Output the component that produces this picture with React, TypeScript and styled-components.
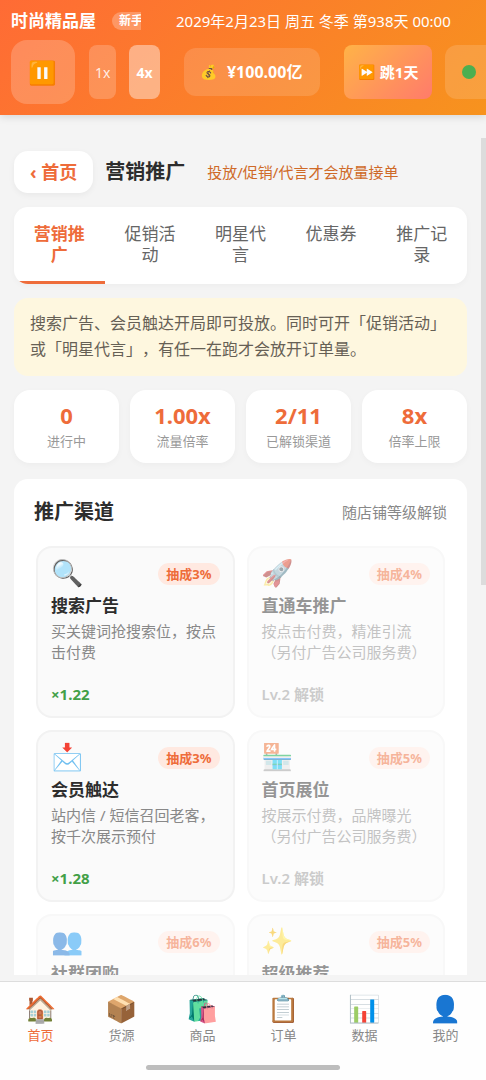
import React from "react";
import styled, { createGlobalStyle } from "styled-components";

const accent = "#ee6c3a";

const GlobalStyle = createGlobalStyle`
  * { box-sizing: border-box; }
  body {
    margin: 0;
    background: #f4f4f4;
    color: #2d2d2d;
    font-family: "Noto Sans", "Noto Sans CJK SC", "Noto Color Emoji", sans-serif;
    text-spacing-trim: space-all;
  }
  button { font-family: inherit; border: 0; padding: 0; cursor: pointer; }
  h1, h2, h3, p, dl, dd, dt { margin: 0; }
`;

const Shell = styled.div`
  display: flex;
  flex-direction: column;
  height: 100vh;
  overflow: hidden;
`;

const TopBar = styled.header`
  flex: none;
  padding: 10px 0 11px 11px;
  background: linear-gradient(135deg, #ff6b35 0%, #f7931e 100%);
  box-shadow: 0 2px 8px rgba(0, 0, 0, 0.12);
  color: #fff;
  overflow: hidden;
`;

const InfoRow = styled.div`
  display: flex;
  align-items: center;
  height: 22px;
  margin-bottom: 8px;
  white-space: nowrap;
`;

const ShopName = styled.h1`
  font-size: 17px;
  line-height: 22px;
  font-weight: 700;
`;

const LevelClip = styled.div`
  display: flex;
  width: 29px;
  margin: 0 35px 0 16px;
  overflow: hidden;
`;

const LevelBadge = styled.span`
  padding: 0 7px;
  border-radius: 9px;
  background: rgba(255, 255, 255, 0.25);
  font-size: 12px;
  line-height: 18px;
  font-weight: 700;
`;

const Clock = styled.time`
  font-size: 15px;
  line-height: 22px;
`;

const ControlRow = styled.div`
  display: flex;
  align-items: center;
  white-space: nowrap;
`;

const PauseButton = styled.button`
  flex: none;
  width: 64px;
  height: 64px;
  margin-right: 14px;
  border-radius: 16px;
  background: rgba(255, 255, 255, 0.2);
  font-size: 23px;
  line-height: 62px;
`;

const SpeedButton = styled.button<{ $active?: boolean }>`
  flex: none;
  height: 54px;
  padding: 0 ${(p) => (p.$active ? 7 : 6)}px;
  margin-right: ${(p) => (p.$active ? 24 : 13)}px;
  border-radius: 8px;
  background: rgba(255, 255, 255, ${(p) => (p.$active ? 0.42 : 0.2)});
  color: ${(p) => (p.$active ? "#fff" : "rgba(255,255,255,0.85)")};
  font-size: 14px;
  font-weight: ${(p) => (p.$active ? 700 : 400)};
`;

const Money = styled.div`
  display: flex;
  flex: none;
  align-items: center;
  gap: 9px;
  height: 48px;
  padding: 0 18px 0 17px;
  margin-right: 24px;
  border-radius: 12px;
  background: rgba(255, 255, 255, 0.14);
  font-size: 16px;
  line-height: 20px;
  font-weight: 700;
`;

const SmallEmoji = styled.span`
  font-size: 14px;
  line-height: 20px;
`;

const SkipButton = styled.button`
  display: flex;
  flex: none;
  align-items: center;
  gap: 4px;
  height: 54px;
  padding: 0 14px;
  margin-right: 13px;
  border-radius: 8px;
  background: linear-gradient(135deg, #ffb347, #ff7b6b);
  color: #fff;
  font-size: 15px;
  line-height: 20px;
  font-weight: 700;
`;

const StatusPill = styled.div`
  display: flex;
  flex: none;
  align-items: center;
  width: 80px;
  height: 54px;
  padding-left: 17px;
  border-radius: 12px;
  background: rgba(255, 255, 255, 0.14);
`;

const Dot = styled.span`
  width: 14px;
  height: 14px;
  border-radius: 50%;
  background: #4caf50;
`;

const Main = styled.main`
  position: relative;
  flex: 1;
  min-height: 0;
  margin-bottom: 6px;
  padding: 36px 19px 0 14px;
  overflow: hidden;
`;

const ScrollThumb = styled.div`
  position: absolute;
  top: 23px;
  right: 0;
  width: 5px;
  height: 52%;
  background: #dcdcdc;
`;

const PageHead = styled.div`
  display: flex;
  align-items: center;
  margin-bottom: 14px;
`;

const BackButton = styled.button`
  height: 42px;
  padding: 0 16px;
  margin-right: 12px;
  border-radius: 14px;
  background: #fff;
  box-shadow: 0 2px 6px rgba(0, 0, 0, 0.05);
  color: ${accent};
  font-size: 18px;
  line-height: 24px;
  font-weight: 700;
`;

const PageTitle = styled.h2`
  margin-right: 22px;
  font-size: 20px;
  line-height: 28px;
  font-weight: 700;
`;

const PageHint = styled.span`
  color: #cf6a28;
  font-size: 15px;
  line-height: 20px;
`;

const Tabs = styled.div`
  display: flex;
  margin-bottom: 14px;
  border-radius: 14px;
  background: #fff;
  box-shadow: 0 2px 6px rgba(0, 0, 0, 0.03);
  overflow: hidden;
`;

const Tab = styled.button<{ $active?: boolean }>`
  display: flex;
  flex: 1;
  justify-content: center;
  min-height: 76px;
  padding: 16px 13px;
  border-bottom: 3px solid ${(p) => (p.$active ? accent : "transparent")};
  background: transparent;
  color: ${(p) => (p.$active ? accent : "#666")};
  font-size: 17px;
  line-height: 21px;
  font-weight: ${(p) => (p.$active ? 700 : 400)};
`;

const Notice = styled.p`
  padding: 12px 16px 14px;
  margin-bottom: 14px;
  border-radius: 14px;
  background: #fef7df;
  color: #666055;
  font-size: 16px;
  line-height: 26px;
`;

const Stats = styled.dl`
  display: grid;
  grid-template-columns: repeat(4, 1fr);
  gap: 11px;
  margin-bottom: 16px;
`;

const Stat = styled.div`
  display: flex;
  flex-direction: column-reverse;
  padding: 9px 0 12px;
  border-radius: 16px;
  background: #fff;
  box-shadow: 0 2px 6px rgba(0, 0, 0, 0.03);
  text-align: center;
`;

const StatValue = styled.dd`
  color: ${accent};
  font-size: 22px;
  line-height: 32px;
  font-weight: 700;
`;

const StatLabel = styled.dt`
  color: #999;
  font-size: 13px;
  line-height: 20px;
`;

const Panel = styled.section`
  padding: 20px 20px 40px;
  border-radius: 14px;
  background: #fff;
`;

const PanelHead = styled.div`
  display: flex;
  align-items: center;
  justify-content: space-between;
  margin-bottom: 21px;
`;

const PanelTitle = styled.h2`
  font-size: 20px;
  line-height: 26px;
  font-weight: 700;
`;

const PanelNote = styled.span`
  color: #888;
  font-size: 15px;
  line-height: 20px;
`;

const Channels = styled.div`
  display: grid;
  grid-template-columns: 1fr 1fr;
  gap: 12px;
  padding: 0 2px;
`;

const Channel = styled.article<{ $locked?: boolean }>`
  display: flex;
  flex-direction: column;
  min-height: 172px;
  padding: 9px 13px 10px;
  border: 2px solid #f2f2f2;
  border-radius: 16px;
  background: #fafafa;
  opacity: ${(p) => (p.$locked ? 0.5 : 1)};
`;

const ChannelTop = styled.div`
  display: flex;
  align-items: center;
  justify-content: space-between;
  height: 34px;
  margin-bottom: 3px;
`;

const ChannelEmoji = styled.span`
  align-self: flex-start;
  font-size: 26px;
  line-height: 30px;
`;

const Cut = styled.span`
  padding: 0 8px;
  border-radius: 11px;
  background: #ffe9e1;
  color: ${accent};
  font-size: 13px;
  line-height: 22px;
  font-weight: 700;
`;

const ChannelName = styled.h3`
  margin-bottom: 3px;
  font-size: 17px;
  line-height: 24px;
  font-weight: 700;
`;

const ChannelText = styled.p`
  color: #888;
  font-size: 15px;
  line-height: 21px;
`;

const Rate = styled.p<{ $locked?: boolean }>`
  margin-top: auto;
  color: ${(p) => (p.$locked ? "#999" : "#43a047")};
  font-size: 15px;
  line-height: 24px;
  font-weight: ${(p) => (p.$locked ? 600 : 700)};
`;

const NavBar = styled.nav`
  flex: none;
  padding: 8px 0 10px;
  border-top: 1px solid #ddd;
  background: #fefefe;
`;

const NavItems = styled.div`
  display: grid;
  grid-template-columns: repeat(6, 1fr);
  margin-bottom: 21px;
`;

const NavItem = styled.button<{ $active?: boolean }>`
  display: flex;
  flex-direction: column;
  align-items: center;
  background: transparent;
  color: ${(p) => (p.$active ? accent : "#888")};
  font-size: 13px;
  line-height: 18px;
`;

const NavEmoji = styled.span`
  font-size: 26px;
  line-height: 36px;
`;

const HomeIndicator = styled.div`
  width: 40%;
  height: 5px;
  margin: 0 auto;
  border-radius: 3px;
  background: #bdbdbd;
`;

const tabs = ["营销推广", "促销活动", "明星代言", "优惠券", "推广记录"];

const stats = [
  { value: "0", label: "进行中" },
  { value: "1.00x", label: "流量倍率" },
  { value: "2/11", label: "已解锁渠道" },
  { value: "8x", label: "倍率上限" },
];

interface ChannelData {
  icon: string;
  name: string;
  cut: string;
  text?: string;
  rate?: string;
  locked?: boolean;
}

const channels: ChannelData[] = [
  { icon: "🔍", name: "搜索广告", cut: "抽成3%", text: "买关键词抢搜索位，按点击付费", rate: "×1.22" },
  { icon: "🚀", name: "直通车推广", cut: "抽成4%", text: "按点击付费，精准引流（另付广告公司服务费）", rate: "Lv.2 解锁", locked: true },
  { icon: "📩", name: "会员触达", cut: "抽成3%", text: "站内信 / 短信召回老客，按千次展示预付", rate: "×1.28" },
  { icon: "🏪", name: "首页展位", cut: "抽成5%", text: "按展示付费，品牌曝光（另付广告公司服务费）", rate: "Lv.2 解锁", locked: true },
  { icon: "👥", name: "社群团购", cut: "抽成6%", locked: true },
  { icon: "✨", name: "超级推荐", cut: "抽成5%", locked: true },
];

const navItems = [
  { icon: "🏠", label: "首页" },
  { icon: "📦", label: "货源" },
  { icon: "🛍️", label: "商品" },
  { icon: "📋", label: "订单" },
  { icon: "📊", label: "数据" },
  { icon: "👤", label: "我的" },
];

export default function App() {
  return (
    <Shell lang="zh-CN">
      <GlobalStyle />
      <TopBar>
        <InfoRow>
          <ShopName>时尚精品屋</ShopName>
          <LevelClip>
            <LevelBadge>新手</LevelBadge>
          </LevelClip>
          <Clock>2029年2月23日 周五 冬季 第938天 00:00</Clock>
        </InfoRow>
        <ControlRow>
          <PauseButton aria-label="暂停">⏸️</PauseButton>
          <SpeedButton>1x</SpeedButton>
          <SpeedButton $active>4x</SpeedButton>
          <Money>
            <SmallEmoji>💰</SmallEmoji>
            <span>¥100.00亿</span>
          </Money>
          <SkipButton>
            <SmallEmoji>⏩</SmallEmoji>
            <span>跳1天</span>
          </SkipButton>
          <StatusPill>
            <Dot />
          </StatusPill>
        </ControlRow>
      </TopBar>

      <Main>
        <PageHead>
          <BackButton>‹ 首页</BackButton>
          <PageTitle>营销推广</PageTitle>
          <PageHint>投放/促销/代言才会放量接单</PageHint>
        </PageHead>

        <Tabs role="tablist">
          {tabs.map((label, i) => (
            <Tab key={label} role="tab" aria-selected={i === 0} $active={i === 0}>
              <span>{label}</span>
            </Tab>
          ))}
        </Tabs>

        <Notice>
          搜索广告、会员触达开局即可投放。同时可开「促销活动」或「明星代言」，有任一在跑才会放开订单量。
        </Notice>

        <Stats>
          {stats.map((s) => (
            <Stat key={s.label}>
              <StatLabel>{s.label}</StatLabel>
              <StatValue>{s.value}</StatValue>
            </Stat>
          ))}
        </Stats>

        <Panel>
          <PanelHead>
            <PanelTitle>推广渠道</PanelTitle>
            <PanelNote>随店铺等级解锁</PanelNote>
          </PanelHead>
          <Channels>
            {channels.map((c) => (
              <Channel key={c.name} $locked={c.locked}>
                <ChannelTop>
                  <ChannelEmoji>{c.icon}</ChannelEmoji>
                  <Cut>{c.cut}</Cut>
                </ChannelTop>
                <ChannelName>{c.name}</ChannelName>
                {c.text && <ChannelText>{c.text}</ChannelText>}
                {c.rate && <Rate $locked={c.locked}>{c.rate}</Rate>}
              </Channel>
            ))}
          </Channels>
        </Panel>
        <ScrollThumb aria-hidden="true" />
      </Main>

      <NavBar>
        <NavItems>
          {navItems.map((n, i) => (
            <NavItem key={n.label} $active={i === 0}>
              <NavEmoji>{n.icon}</NavEmoji>
              <span>{n.label}</span>
            </NavItem>
          ))}
        </NavItems>
        <HomeIndicator />
      </NavBar>
    </Shell>
  );
}
